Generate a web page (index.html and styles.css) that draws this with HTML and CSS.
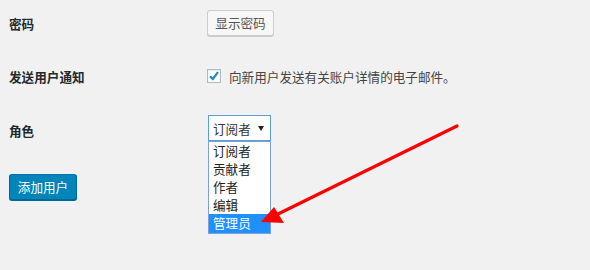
FILE: index.html
```html
<!DOCTYPE html>
<html lang="zh-CN">
<head>
    <meta charset="UTF-8">
    <title>添加用户</title>
    <link rel="stylesheet" href="styles.css">
</head>
<body>
    <div class="form-table">
        <div class="row row-pass">
            <div class="label">密码</div>
            <div class="field">
                <button type="button" class="button">显示密码</button>
            </div>
        </div>
        <div class="row row-notify">
            <div class="label">发送用户通知</div>
            <div class="field">
                <label class="check">
                    <span class="box">
                        <svg viewBox="0 0 14 14" width="14" height="14">
                            <path d="M3 7.2 L5.8 10 L11 3.2" fill="none" stroke="#1e8cbe" stroke-width="2.2"/>
                        </svg>
                    </span>
                    向新用户发送有关账户详情的电子邮件。
                </label>
            </div>
        </div>
        <div class="row row-role">
            <div class="label role-label">角色</div>
            <div class="field">
                <div class="select">
                    <span class="current">订阅者</span>
                    <span class="caret"></span>
                    <ul class="options">
                        <li>订阅者</li>
                        <li>贡献者</li>
                        <li>作者</li>
                        <li>编辑</li>
                        <li class="active">管理员</li>
                    </ul>
                </div>
            </div>
        </div>
    </div>
    <div class="submit">
        <button type="submit" class="button button-primary">添加用户</button>
    </div>

    <!-- red annotation arrow -->
    <svg class="arrow" width="590" height="270" viewBox="0 0 590 270">
        <line x1="457" y1="126" x2="278" y2="214" stroke="#ff0000" stroke-width="3.2" stroke-linecap="round"/>
        <polygon points="261,222 274,207 284,223" fill="#ff0000"/>
    </svg>
</body>
</html>
```

FILE: styles.css
```css
body {
    margin: 0;
    padding: 10px 0 0 9px;
    background: #f1f1f1;
    color: #444;
    font-family: "Noto Sans CJK SC", "Noto Sans", sans-serif;
    font-size: 12.6px;
    position: relative;
    height: 260px;
    overflow: hidden;
}
.row {
    display: grid;
    grid-template-columns: 198px auto;
    align-items: center;
    height: 26px;
}
.row-notify {
    margin-top: 27px;
}
.row-role {
    margin-top: 26px;
}
.label {
    color: #23282d;
    font-weight: bold;
}
.role-label {
    padding-top: 5px;
}
.button {
    height: 26px;
    width: 67px;
    padding: 0;
    border: 1px solid #ccc;
    border-radius: 3px;
    background: #f7f7f7;
    box-shadow: 0 1px 0 #ccc;
    color: #555;
    font-family: inherit;
    font-size: 12.6px;
    line-height: 24px;
    text-align: center;
    white-space: nowrap;
}
.check {
    display: flex;
    align-items: center;
    gap: 8px;
}
.box {
    width: 12px;
    height: 12px;
    border: 1px solid #b4b9be;
    background: #fff;
    box-shadow: inset 0 1px 2px rgba(0,0,0,.1);
    display: flex;
    align-items: center;
    justify-content: center;
}
.box svg {
    flex: none;
}
.select {
    position: relative;
    width: 61px;
    height: 24px;
    border: 1px solid #5b9dd9;
    background: #fff;
    display: flex;
    align-items: center;
    margin-left: 1px;
    color: #32373c;
}
.current {
    padding-left: 4px;
}
.caret {
    margin-left: 7px;
    width: 0;
    height: 0;
    border-left: 3px solid transparent;
    border-right: 3px solid transparent;
    border-top: 5px solid #222;
}
.options {
    position: absolute;
    top: 25px;
    left: -1px;
    width: 61px;
    margin: 0;
    padding: 0;
    list-style: none;
    background: #fff;
    border: 1px solid #7e9fd6;
    z-index: 2;
}
.options li {
    height: 18px;
    line-height: 18px;
    padding-left: 4px;
    color: #222;
}
.options li.active {
    background: #1e90ff;
    color: #fff;
    height: 19px;
}
.submit {
    margin-top: 33px;
}
.button-primary {
    width: 68px;
    background: #0085ba;
    border-color: #0073aa #006799 #006799;
    box-shadow: 0 1px 0 #006799;
    color: #fff;
}
.arrow {
    position: absolute;
    top: 0;
    left: 0;
    z-index: 3;
}
```
